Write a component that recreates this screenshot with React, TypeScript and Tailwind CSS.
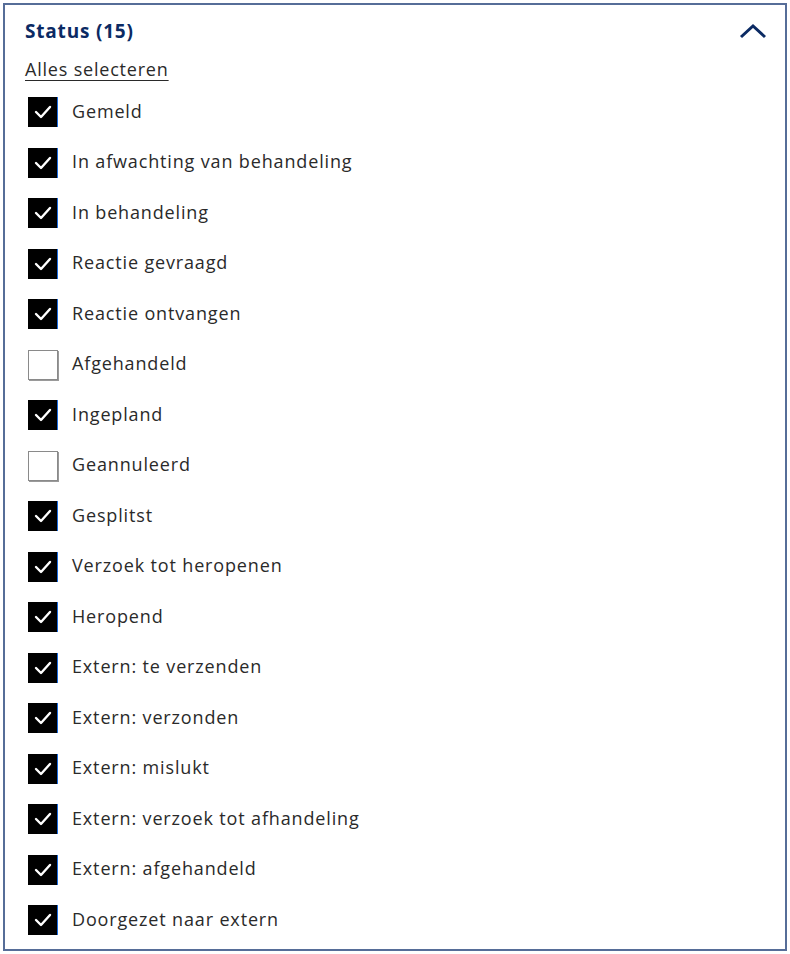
import { useState } from 'react'

const statuses = [
  { label: 'Gemeld', checked: true },
  { label: 'In afwachting van behandeling', checked: true },
  { label: 'In behandeling', checked: true },
  { label: 'Reactie gevraagd', checked: true },
  { label: 'Reactie ontvangen', checked: true },
  { label: 'Afgehandeld', checked: false },
  { label: 'Ingepland', checked: true },
  { label: 'Geannuleerd', checked: false },
  { label: 'Gesplitst', checked: true },
  { label: 'Verzoek tot heropenen', checked: true },
  { label: 'Heropend', checked: true },
  { label: 'Extern: te verzenden', checked: true },
  { label: 'Extern: verzonden', checked: true },
  { label: 'Extern: mislukt', checked: true },
  { label: 'Extern: verzoek tot afhandeling', checked: true },
  { label: 'Extern: afgehandeld', checked: true },
  { label: 'Doorgezet naar extern', checked: true },
]

export default function App() {
  const [items, setItems] = useState(statuses)

  const toggle = (i: number) =>
    setItems(prev => prev.map((it, idx) => (idx === i ? { ...it, checked: !it.checked } : it)))

  return (
    <div className="w-[790px] h-[954px] bg-white p-[3px] font-['Open_Sans','Noto_Sans',sans-serif]">
      <div className="h-full border-2 border-[#566d98] pl-[20px] pr-[20px] pt-[13px]">
        {/* Header */}
        <div className="flex items-center justify-between h-[26px]">
          <h2 className="text-[19px] font-bold text-[#0b2a63] tracking-[0.8px] leading-none">Status (15)</h2>
          <svg width="28" height="16" viewBox="0 0 28 16" className="mr-[-2px]">
            <path d="M2 14 L14 3 L26 14" fill="none" stroke="#0b2a63" strokeWidth="3" />
          </svg>
        </div>

        <button className="mt-[16px] text-[18px] leading-none text-[#2a2a2a] tracking-[0.8px] underline underline-offset-[4px] decoration-1">
          Alles selecteren
        </button>

        {/* Checkbox list */}
        <ul className="mt-[15px] flex flex-col gap-[20.5px]">
          {items.map((item, i) => (
            <li key={item.label} className="flex items-center h-[30px] pl-[3px]">
              <button
                onClick={() => toggle(i)}
                className={
                  item.checked
                    ? 'w-[30px] h-[30px] bg-black border-r border-[#1a6be0] flex items-center justify-center'
                    : 'w-[30px] h-[30px] bg-white border border-[#8a8a8a] shadow-[1px_1px_0_#9a9a9a] flex items-center justify-center'
                }
              >
                {item.checked && (
                  <svg width="18" height="14" viewBox="0 0 18 14">
                    <path d="M2 7 L7 12 L16 2" fill="none" stroke="#fff" strokeWidth="2.4" strokeLinecap="round" strokeLinejoin="round" />
                  </svg>
                )}
              </button>
              <span className="ml-[14px] -mt-[3px] text-[18px] text-[#2a2a2a] tracking-[0.85px] leading-none">{item.label}</span>
            </li>
          ))}
        </ul>
      </div>
    </div>
  )
}
